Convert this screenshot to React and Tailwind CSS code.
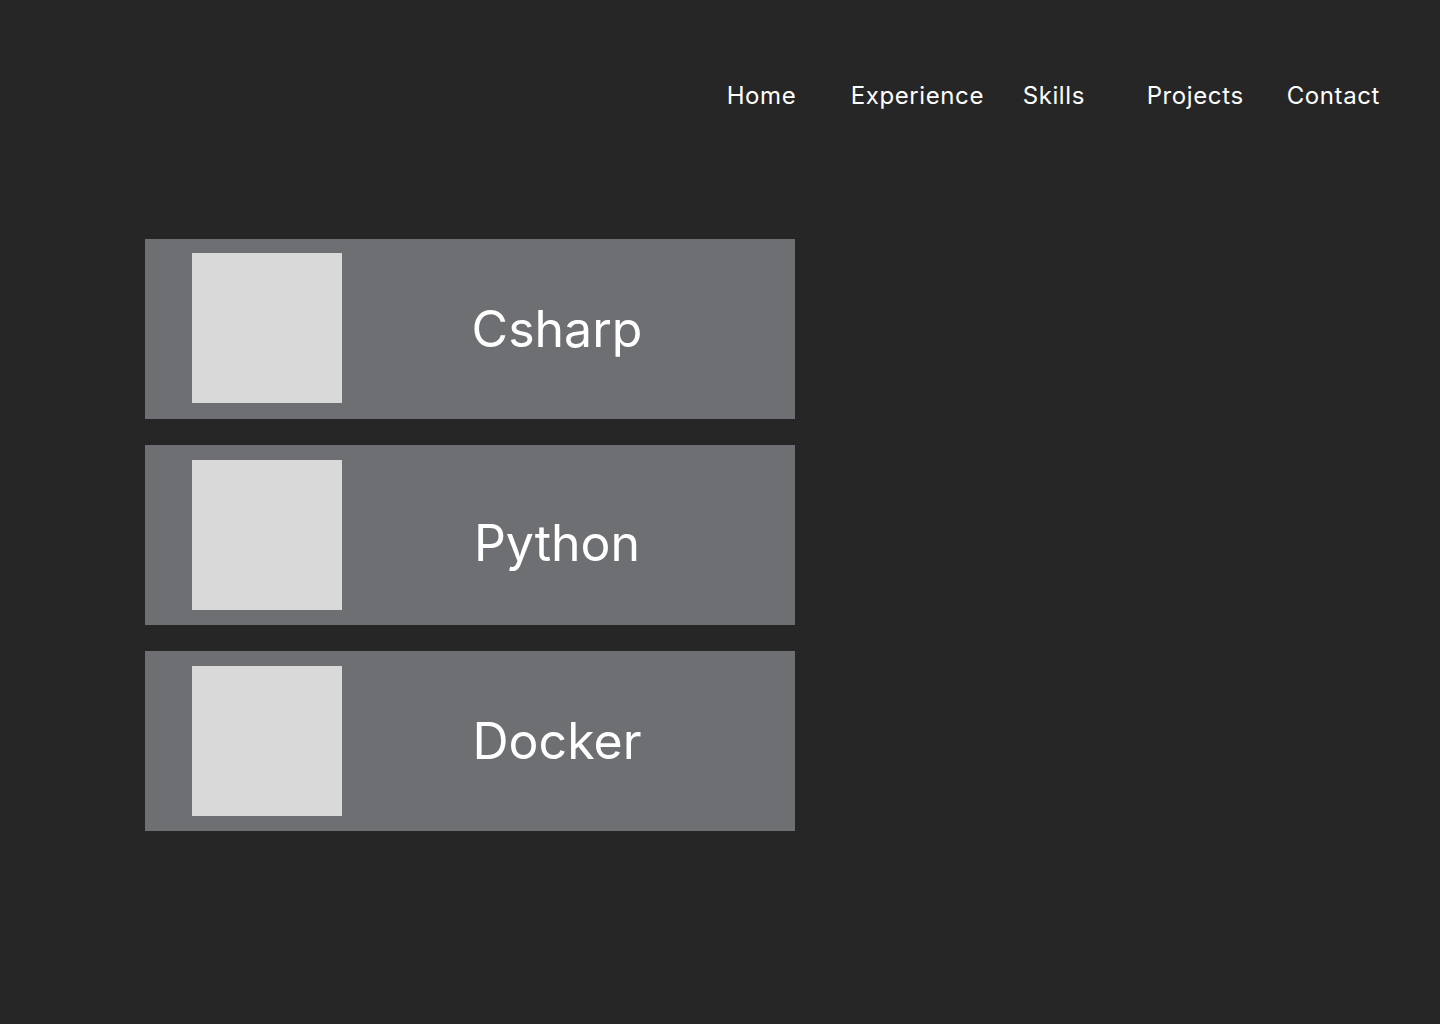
import React from 'react';

const links = [
    { label: 'Home', w: 'w-[124px]' },
    { label: 'Experience', w: 'w-[172px]' },
    { label: 'Skills', w: 'w-[124px]' },
    { label: 'Projects', w: 'w-[140px]' },
    { label: 'Contact', w: '' },
];

const skills = [
    { name: 'Csharp', shift: '', img: '-mt-[2px]' },
    { name: 'Python', shift: 'pt-[16px]', img: '' },
    { name: 'Docker', shift: '', img: '' },
];

export default function App() {
    return (
        <div className="min-h-screen w-full bg-[#262626] text-white font-['Inter',sans-serif]">
            {/* Nav */}
            <nav className="flex justify-end pt-[81px] pr-[60px]">
                {links.map((l) => (
                    <a key={l.label} href="#" className={`${l.w} text-[24px] leading-[29px] tracking-[0.6px] whitespace-nowrap`}>
                        {l.label}
                    </a>
                ))}
            </nav>

            {/* Skills list */}
            <div className="flex flex-col gap-[26px] pl-[145px] pt-[129px]">
                {skills.map((s) => (
                    <div key={s.name} className="flex items-center w-[650px] h-[180px] bg-[#6e6f73] pl-[47px]">
                        <div className={`w-[150px] h-[150px] bg-[#d9d9d9] shrink-0 ${s.img}`}></div>
                        <div className={`flex-1 text-center pr-[23px] text-[50px] leading-[60px] ${s.shift}`}>
                            {s.name}
                        </div>
                    </div>
                ))}
            </div>
        </div>
    );
}
